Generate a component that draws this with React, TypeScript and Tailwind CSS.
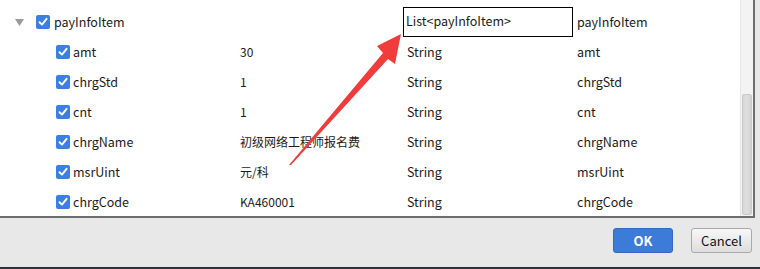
import React from 'react';

interface Row {
  name: string;
  value: string;
  type: string;
  alias: string;
}

const rows: Row[] = [
  { name: 'amt', value: '30', type: 'String', alias: 'amt' },
  { name: 'chrgStd', value: '1', type: 'String', alias: 'chrgStd' },
  { name: 'cnt', value: '1', type: 'String', alias: 'cnt' },
  { name: 'chrgName', value: '初级网络工程师报名费', type: 'String', alias: 'chrgName' },
  { name: 'msrUint', value: '元/科', type: 'String', alias: 'msrUint' },
  { name: 'chrgCode', value: 'KA460001', type: 'String', alias: 'chrgCode' },
];

const Check = () => (
  <span className="w-[14px] h-[14px] rounded-[2px] bg-[#3b7fe3] flex items-center justify-center shrink-0">
    <svg width="10" height="10" viewBox="0 0 10 10">
      <path d="M1.5 5.2 L4 7.6 L8.6 1.8" fill="none" stroke="#fff" strokeWidth="1.9" strokeLinecap="round" strokeLinejoin="round" />
    </svg>
  </span>
);

const App: React.FC = () => {
  return (
    <div
      className="w-[760px] h-[269px] bg-[#e8e8e8] flex flex-col overflow-hidden relative text-[12.5px] text-[#1b1b1b]"
      style={{ fontFamily: '"Noto Sans CJK SC", "Noto Sans", sans-serif' }}
    >
      {/* Scroll pane */}
      <div className="w-[755px] h-[218px] bg-white border-r-2 border-b-2 border-[#6e6e6e] flex shrink-0">
        <div className="flex-1 pt-[7px]">
          {/* Root row */}
          <div className="h-[30px] flex items-center">
            <div className="w-[240px] flex items-center">
              <svg width="9" height="7" viewBox="0 0 9 7" className="ml-[15px] mr-[12px]">
                <path d="M0 0 H9 L4.5 7 Z" fill="#9a9a9a" />
              </svg>
              <Check />
              <span className="ml-[4px] leading-none">payInfoItem</span>
            </div>
            <div className="w-[163px]" />
            <div className="w-[170px] h-[30px] border border-black flex items-center pl-[2px] pb-[2px] leading-none">
              List&lt;payInfoItem&gt;
            </div>
            <div className="pl-[4px] leading-none">payInfoItem</div>
          </div>
          {rows.map((r) => (
            <div key={r.name} className="h-[30px] flex items-center leading-none">
              <div className="w-[240px] flex items-center pl-[56px]">
                <Check />
                <span className="ml-[3px]">{r.name}</span>
              </div>
              <div className="w-[163px] text-[12px]">{r.value}</div>
              <div className="w-[170px] pl-[4px]">{r.type}</div>
              <div className="pl-[4px]">{r.alias}</div>
            </div>
          ))}
        </div>
        {/* Scrollbar */}
        <div className="w-[13px] bg-[#f3f3f3] border-l border-[#e6e6e6] pt-[94px] flex justify-center">
          <div className="w-[10px] h-[121px] rounded-[2px] border border-[#c9c9c9] bg-gradient-to-r from-[#d9d9d9] via-[#dedede] to-[#d2d2d2]" />
        </div>
      </div>

      {/* Buttons */}
      <div className="flex-1 flex justify-end items-start pt-[10px] pr-[8px] gap-[18px]">
        <button className="w-[60px] h-[25px] rounded-[3px] bg-[#3d7bd9] border border-[#3468c3] text-white font-bold text-[13px]">
          OK
        </button>
        <button className="w-[61px] h-[25px] rounded-[3px] bg-gradient-to-b from-[#f7f7f7] to-[#dedede] border border-[#a9a9a9] text-[#111] text-[13px]">
          Cancel
        </button>
      </div>
      <div className="h-[2px] bg-[#2c3138] shrink-0" />

      {/* Red annotation arrow */}
      <svg className="absolute left-0 top-0 pointer-events-none" width="760" height="269">
        <polygon
          points="289,165 291,165 388,59 395,64 401,34 377,46 383,53"
          fill="#f23b3b"
        />
      </svg>
    </div>
  );
};

export default App;
